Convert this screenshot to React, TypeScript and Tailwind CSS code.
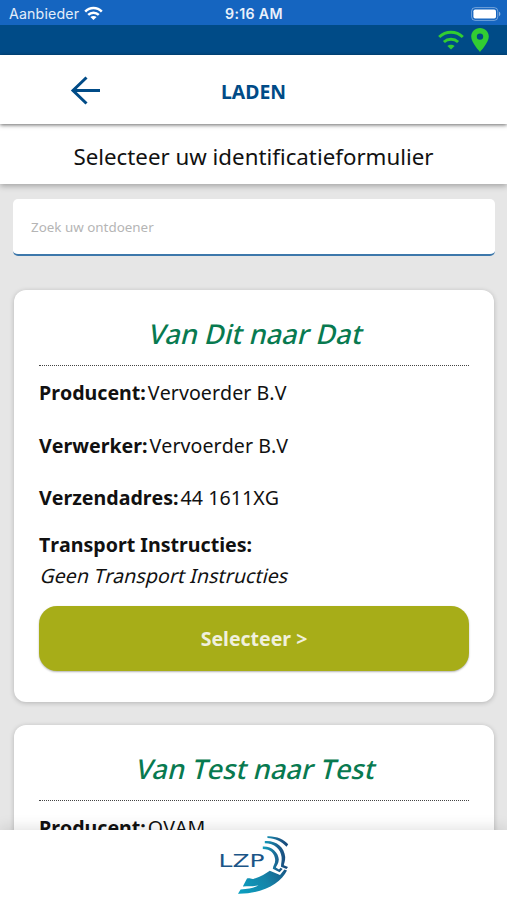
interface FormCardProps {
  from: string;
  to: string;
  producer: string;
  processor: string;
  address: string;
  instructions?: string;
}

function StatusWifi() {
  return (
    <svg width="19" height="15" viewBox="0 0 19 15" fill="none" stroke="#fff" strokeWidth="2.5">
      <path d="M1.2 5.6 C5.8 0.8 13.2 0.8 17.8 5.6" />
      <path d="M4.2 8.9 C7.2 6 11.8 6 14.8 8.9" />
      <path d="M6.4 11 C8.2 9.5 10.8 9.5 12.6 11 L9.5 14 Z" fill="#fff" stroke="none" />
    </svg>
  );
}

function WifiIcon() {
  return (
    <svg width="26" height="20" viewBox="0 0 26 20" fill="none" stroke="currentColor" strokeWidth="3">
      <path d="M1.2 7 C7.8 0.6 18.2 0.6 24.8 7" />
      <path d="M5.9 12 C9.9 8.4 16.1 8.4 20.1 12" />
      <path d="M9.4 16 C11.4 14.2 14.6 14.2 16.6 16 L13 19.4 Z" fill="currentColor" stroke="none" />
    </svg>
  );
}

function PinIcon() {
  return (
    <svg width="18" height="24" viewBox="0 0 18 24" fill="currentColor">
      <path
        fillRule="evenodd"
        d="M9 0 C4 0 0.2 3.8 0.2 8.6 C0.2 14.8 9 24 9 24 C9 24 17.8 14.8 17.8 8.6 C17.8 3.8 14 0 9 0 Z M9 5.4 A3.2 3.2 0 1 1 9 11.8 A3.2 3.2 0 1 1 9 5.4 Z"
      />
    </svg>
  );
}

function BatteryIcon() {
  return (
    <svg width="30" height="14" viewBox="0 0 30 14" fill="none">
      <rect x="0.6" y="0.6" width="26.2" height="12.8" rx="3.6" stroke="#fff" strokeOpacity="0.4" strokeWidth="1" />
      <rect x="2.4" y="2.4" width="22.6" height="9.2" rx="1.8" fill="#fff" />
      <path d="M28 4.8 C29.8 5.4 29.8 8.6 28 9.2 Z" fill="#fff" fillOpacity="0.5" />
    </svg>
  );
}

function Logo() {
  return (
    <svg width="72" height="62" viewBox="218 834 72 62" fill="none">
      <defs>
        <linearGradient id="hand" x1="238" y1="890" x2="288" y2="860" gradientUnits="userSpaceOnUse">
          <stop offset="0" stopColor="#0a9fc0" />
          <stop offset="0.5" stopColor="#1683a8" />
          <stop offset="1" stopColor="#174b7c" />
        </linearGradient>
        <linearGradient id="arcs" x1="262" y1="0" x2="286" y2="0" gradientUnits="userSpaceOnUse">
          <stop offset="0" stopColor="#12a3c0" />
          <stop offset="0.7" stopColor="#1c5e8c" />
          <stop offset="1" stopColor="#174b7c" />
        </linearGradient>
      </defs>
      <text
        x="218.5"
        y="866.7"
        fontFamily="DejaVu Sans, sans-serif"
        fontSize="16.8"
        fill="#1b5587"
        textLength="46"
        lengthAdjust="spacingAndGlyphs"
      >
        LZP
      </text>
      <g fill="url(#arcs)">
        <path d="M267.3 836.2 C276 835.8 284.5 839.5 288.2 844.2 L286.5 846.8 C282 841.5 275 838.3 267.5 838 Z" />
        <path d="M264.8 841 C276 840.2 284.5 847 285.2 857 C285.4 861 283.8 864 283.8 865.2 L288 867 L286.5 869 L281 866.8 C281 863 282 861 281.6 857 C280.8 849 274.5 843.4 264.8 843.2 Z" />
        <path d="M262.8 846.6 C271.5 846 278.4 852.5 278.8 859.5 C278.8 863.5 276.2 866 275.8 867.6 L279 869.6 L280.6 867.8 L282.6 869 L279.6 872.2 L272.8 868.8 C273 865.5 275.4 863.5 275.2 860 C274.8 853.5 270.5 849 262.8 849 Z" />
      </g>
      <path
        d="M238 893.7 L240.6 889.4 C249 889 254 887.9 258.5 885.2 C253 886.5 248.5 886.2 242.8 886.4 L247 878.6 C249.5 877.6 251.5 879.6 254 878.8 C261 876.4 266 873.6 269.8 870.8 L280 875 L284.4 869.6 L287 870.5 C281 883 263 894 238 893.7 Z"
        fill="url(#hand)"
      />
    </svg>
  );
}

function Field({ label, value }: { label: string; value: string }) {
  return (
    <div className="flex h-[52.5px] items-start gap-[2px] text-[19.6px] leading-[28px] text-[#111]">
      <span className="font-bold">{label}:</span>
      <span className="tracking-[0.05px]">{value}</span>
    </div>
  );
}

function FormCard({ from, to, producer, processor, address, instructions }: FormCardProps) {
  return (
    <section className="h-[412px] shrink-0 rounded-xl bg-white px-[25px] pt-[24px] shadow-[0_1px_5px_rgba(0,0,0,0.22)]">
      <h2 className="-skew-x-[14deg] pl-[5px] text-center text-[27.2px] leading-[40px] font-medium text-[#087a50]">
        Van {from} naar {to}
      </h2>
      <div className="mt-[11px] mb-[13px] border-t border-dotted border-[#444]" />
      <Field label="Producent" value={producer} />
      <Field label="Verwerker" value={processor} />
      <Field label="Verzendadres" value={address} />
      <div className="-mt-[8px] text-[19.6px] leading-[31px] text-[#111]">
        <p className="font-bold">Transport Instructies:</p>
        <p className="-skew-x-[14deg] pl-[2px] tracking-[0.05px]">{instructions ?? "Geen Transport Instructies"}</p>
      </div>
      <button className="mt-[15px] h-[65px] w-full rounded-[18px] bg-[#a7ad18] pt-[2px] text-[19.5px] font-bold text-[#f0f0dc] shadow-[0_1px_2px_rgba(0,0,0,0.3)]">
        Selecteer &gt;
      </button>
    </section>
  );
}

const forms: FormCardProps[] = [
  { from: "Dit", to: "Dat", producer: "Vervoerder B.V", processor: "Vervoerder B.V", address: "44 1611XG" },
  { from: "Test", to: "Test", producer: "OVAM", processor: "OVAM", address: "44 1611XG" },
];

export default function App() {
  return (
    <div className="flex h-[900px] w-[507px] flex-col overflow-hidden bg-[#e6e6e6] font-['Noto_Sans',sans-serif] [font-kerning:none]">
      {/* Status bar */}
      <div className="grid h-[25px] shrink-0 grid-cols-3 items-center bg-[#1565c0] pt-[2px] pr-[6px] pl-[9px] font-['Inter',sans-serif] text-[14.2px] text-white">
        <div className="flex items-center gap-[5px]">
          <span className="tracking-[0.15px] text-[#e3edf9]">Aanbieder</span>
          <StatusWifi />
        </div>
        <span className="pr-[2px] text-center font-semibold tracking-[0.3px] text-[#e9f1fb]">9:16 AM</span>
        <div className="flex justify-end">
          <BatteryIcon />
        </div>
      </div>
      <div className="flex h-[30px] shrink-0 items-center justify-end gap-[7px] bg-[#004b87] pr-[18px] text-[#32cd32]">
        <WifiIcon />
        <PinIcon />
      </div>

      <header className="z-20 grid h-[69px] shrink-0 grid-cols-3 items-center bg-white pt-[2px] text-[#004b87] shadow-[0_1px_4px_rgba(0,0,0,0.6)]">
        <button className="pl-[70px]">
          <svg width="31" height="30" viewBox="0 0 31 30" fill="none" stroke="currentColor" strokeWidth="3">
            <path d="M30 14.5 H3 M16.5 1.5 L3 14.5 L16.5 27.5" />
          </svg>
        </button>
        <h1 className="pt-[2px] text-center text-[19.4px] font-bold">LADEN</h1>
      </header>
      <div className="z-10 flex h-[60px] shrink-0 items-center justify-center bg-white pt-[6px] text-[22.3px] text-[#111] shadow-[0_2px_6px_rgba(0,0,0,0.3)]">
        Selecteer uw identificatieformulier
      </div>

      <main className="flex min-h-0 flex-1 flex-col overflow-hidden pt-[15px]">
        <input
          className="mr-[12px] ml-[13px] h-[57px] shrink-0 rounded-[5px] border-b-2 border-[#3d78ab] bg-white px-[18px] text-[13.4px] placeholder:text-[#b5b5b5]"
          placeholder="Zoek uw ontdoener"
        />
        <div className="flex flex-col gap-[23px] pt-[34px] pr-[13px] pl-[14px]">
          {forms.map((form) => (
            <FormCard key={form.from} {...form} />
          ))}
        </div>
      </main>

      <footer className="z-10 flex h-[70px] shrink-0 justify-center bg-white pt-[4px] shadow-[0_-2px_14px_rgba(0,0,0,0.12)]">
        <Logo />
      </footer>
    </div>
  );
}
